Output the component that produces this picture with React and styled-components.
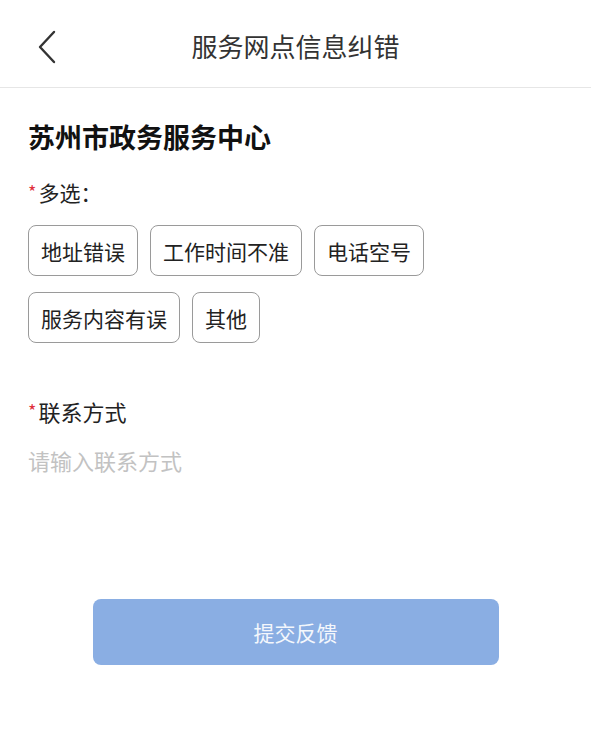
import { createGlobalStyle, styled } from "styled-components"

const GlobalStyle = createGlobalStyle`
  html, body {
    margin: 0;
    padding: 0;
    background: #ffffff;
    font-family: "Noto Sans CJK SC", "Noto Sans", sans-serif;
  }
`

const Page = styled.div`
  width: 591px;
  min-height: 734px;
  background: #fff;
  display: flex;
  flex-direction: column;
`

const Header = styled.header`
  height: 87px;
  border-bottom: 1px solid #e6e6e6;
  display: flex;
  align-items: center;
  justify-content: center;
  position: relative;
`

const BackButton = styled.button`
  position: absolute;
  left: 30px;
  top: 27px;
  width: 34px;
  height: 40px;
  border: none;
  background: none;
  padding: 0;
  display: flex;
  align-items: center;
  justify-content: center;
`

const Title = styled.h1`
  margin: 0;
  font-size: 26px;
  font-weight: 400;
  color: #333;
  transform: translateY(2px);
`

const Body = styled.main`
  padding: 0 28px;
  display: flex;
  flex-direction: column;
`

const CenterName = styled.h2`
  margin: 31px 0 0;
  font-size: 27px;
  line-height: 36px;
  font-weight: 700;
  color: #111;
`

const Label = styled.div`
  margin-top: ${props => props.$top}px;
  font-size: ${props => props.$size}px;
  line-height: 28px;
  color: #222;
  display: flex;
  align-items: center;
`

const Star = styled.span`
  color: #e0303d;
  font-size: 18px;
  margin-right: 2px;
  transform: translateY(-1px);
`

const Chips = styled.div`
  margin-top: 19px;
  display: flex;
  flex-wrap: wrap;
  gap: 16px 12px;
  width: 420px;
`

const Chip = styled.button`
  height: 51px;
  padding: 0 12px;
  border: 1.5px solid #9a9a9a;
  border-radius: 8px;
  background: #fff;
  font-family: inherit;
  font-size: 21px;
  color: #222;
`

const Placeholder = styled.input`
  margin-top: 21px;
  border: none;
  outline: none;
  padding: 0;
  font-family: inherit;
  font-size: 22px;
  line-height: 28px;
  color: #222;
  background: transparent;

  &::placeholder {
    color: #c2c2c2;
  }
`

const Submit = styled.button`
  margin: 125px auto 0;
  width: 406px;
  height: 66px;
  border: none;
  border-radius: 8px;
  background: #8aaee3;
  color: #f4f7fc;
  font-family: inherit;
  font-size: 21px;
`

const options = ["地址错误", "工作时间不准", "电话空号", "服务内容有误", "其他"]

export default function App() {
  return (
    <Page>
      <GlobalStyle />
      <Header>
        <BackButton aria-label="返回">
          <svg width="22" height="34" viewBox="0 0 22 34" fill="none">
            <path d="M18 2 L4 17 L18 32" stroke="#333" strokeWidth="2.4" strokeLinecap="round" strokeLinejoin="round" />
          </svg>
        </BackButton>
        <Title>服务网点信息纠错</Title>
      </Header>
      <Body>
        <CenterName>苏州市政务服务中心</CenterName>
        <Label $top={23} $size={21}><Star>*</Star>多选：</Label>
        <Chips>
          {options.map(o => (
            <Chip key={o}>{o}</Chip>
          ))}
        </Chips>
        <Label $top={54} $size={22}><Star>*</Star>联系方式</Label>
        <Placeholder placeholder="请输入联系方式" />
      </Body>
      <Submit>提交反馈</Submit>
    </Page>
  )
}
